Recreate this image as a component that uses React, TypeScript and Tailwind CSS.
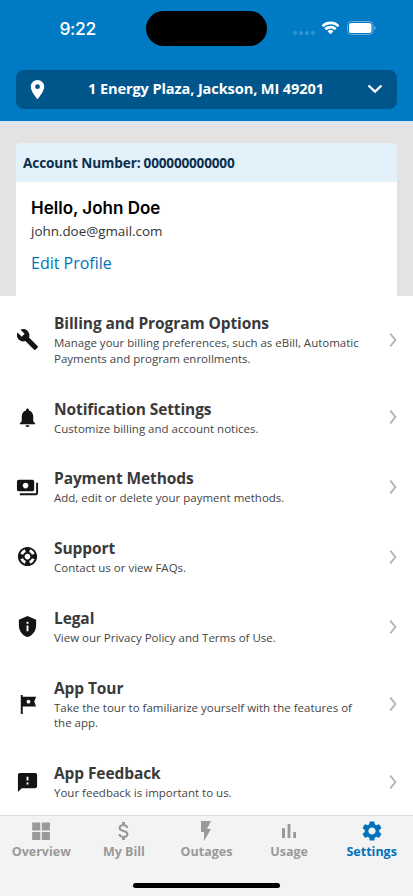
import type { ReactNode } from 'react';
import type { IconType } from 'react-icons';
import {
  MdAttachMoney,
  MdBuild,
  MdFeedback,
  MdFlashOn,
  MdLocationOn,
  MdNotifications,
  MdPayments,
  MdPrivacyTip,
  MdSettings,
  MdSupport,
  MdTour,
} from 'react-icons/md';

interface SettingsItem {
  title: string;
  description: ReactNode;
  icon: IconType;
  tall?: boolean;
}

interface Tab {
  label: string;
  icon: ReactNode;
  active?: boolean;
}

const items: SettingsItem[] = [
  {
    title: 'Billing and Program Options',
    description: (
      <>
        Manage your billing preferences, such as eBill, Automatic
        <br />
        Payments and program enrollments.
      </>
    ),
    icon: MdBuild,
    tall: true,
  },
  {
    title: 'Notification Settings',
    description: 'Customize billing and account notices.',
    icon: MdNotifications,
  },
  {
    title: 'Payment Methods',
    description: 'Add, edit or delete your payment methods.',
    icon: MdPayments,
  },
  { title: 'Support', description: 'Contact us or view FAQs.', icon: MdSupport },
  {
    title: 'Legal',
    description: 'View our Privacy Policy and Terms of Use.',
    icon: MdPrivacyTip,
  },
  {
    title: 'App Tour',
    description: (
      <>
        Take the tour to familiarize yourself with the features of
        <br />
        the app.
      </>
    ),
    icon: MdTour,
    tall: true,
  },
  { title: 'App Feedback', description: 'Your feedback is important to us.', icon: MdFeedback },
];

const tabs: Tab[] = [
  {
    label: 'Overview',
    icon: (
      <svg viewBox="0 0 24 24" className="size-6" fill="currentColor">
        <path d="M3.2 3.5h8.1v8.1H3.2zM12.8 3.5h8.1v8.1h-8.1zM3.2 13.1h8.1v7.9H3.2zM12.8 13.1h8.1v7.9h-8.1z" />
      </svg>
    ),
  },
  { label: 'My Bill', icon: <MdAttachMoney className="size-6" /> },
  { label: 'Outages', icon: <MdFlashOn className="size-6" /> },
  {
    label: 'Usage',
    icon: (
      <svg viewBox="0 0 24 24" className="size-6" fill="currentColor">
        <path d="M5 9.2h3V19H5zM10.6 5h2.8v14h-2.8zM16.2 13H19v6h-2.8z" />
      </svg>
    ),
  },
  { label: 'Settings', icon: <MdSettings className="size-6" />, active: true },
];

function StatusBar() {
  return (
    <div className="flex h-[70px] items-start pt-[11px]">
      <div className="w-[146px] pt-[7px] pl-[59.5px] font-['Inter'] text-[17.5px] leading-[22px] font-medium tracking-[-0.4px]">
        9:22
      </div>
      <div className="h-[35px] w-[121px] rounded-full bg-black" />
      <div className="ml-[26px] flex pt-[20px]">
        <div className="flex gap-[2px]">
          {[0, 1, 2, 3].map((dot) => (
            <span key={dot} className="size-1 rounded-full bg-[#3395cf]" />
          ))}
        </div>
      </div>
      <svg viewBox="0 0 18 13" className="mt-[10px] ml-[6px] h-[14px] w-[19px]" fill="currentColor">
        <path d="M9 2.9c2.5 0 4.8 1 6.5 2.6.15.13.36.13.5 0l1.25-1.37a.36.36 0 0 0 0-.52A12 12 0 0 0 .75 3.6a.36.36 0 0 0 0 .52L2 5.5c.14.13.35.13.5 0A9.4 9.4 0 0 1 9 2.9z" />
        <path d="M9 7.05c1.37 0 2.7.5 3.7 1.42.15.14.37.14.5 0l1.36-1.38a.37.37 0 0 0 0-.53 7.9 7.9 0 0 0-11.1 0 .37.37 0 0 0 0 .53L4.8 8.47c.14.14.36.14.5 0A5.5 5.5 0 0 1 9 7.05z" />
        <path d="M11.6 9.85a.35.35 0 0 0 0-.53 3.9 3.9 0 0 0-5.2 0 .35.35 0 0 0 0 .53l2.35 2.4c.14.14.36.14.5 0z" />
      </svg>
      <svg viewBox="0 0 29 14" className="mt-[10px] ml-[7px] h-[14px] w-[29px]">
        <rect x="0.5" y="0.5" width="25.5" height="13" rx="4" fill="none" stroke="#66afdb" />
        <rect x="2" y="2" width="22.5" height="10" rx="2.6" fill="white" />
        <path d="M27.2 4.8v4.4c.9-.4 1.5-1.2 1.5-2.2s-.6-1.8-1.5-2.2z" fill="#66afdb" />
      </svg>
    </div>
  );
}

function Chevron() {
  return (
    <svg viewBox="0 0 8 14" className="h-[14px] w-2 shrink-0" fill="none">
      <path d="M1.3 0.6 6.4 7l-5.1 6.4" stroke="#b5b5b5" strokeWidth="1.9" />
    </svg>
  );
}

function SettingsRow({ title, description, icon: Icon, tall }: SettingsItem) {
  return (
    <button
      type="button"
      className={`flex w-full shrink-0 items-center px-4 text-left ${tall ? 'h-[85.5px]' : 'h-[69.8px]'}`}
    >
      <Icon className="size-[23px] shrink-0 text-[#141414]" />
      <span className="ml-[15px] flex-1">
        <span className="-mt-px block pb-px text-[15.5px] leading-[22px] font-bold tracking-[-0.1px] text-[#3a3a3a]">
          {title}
        </span>
        <span className="block text-[11.5px] leading-[15.8px] whitespace-nowrap text-[#454545]">
          {description}
        </span>
      </span>
      <Chevron />
    </button>
  );
}

export default function App() {
  return (
    <div className="flex h-[896px] w-[413px] flex-col overflow-hidden bg-white font-['Open_Sans',sans-serif]">
      {/* Header */}
      <header className="h-[121px] shrink-0 bg-[#007ac2] text-white">
        <StatusBar />
        <button
          type="button"
          className="mx-4 flex h-[39px] w-[381px] items-center rounded-lg bg-[#00568a] pr-3.5 pl-[10px]"
        >
          <MdLocationOn className="size-[23px]" />
          <span className="flex-1 pr-1 pb-px text-center text-[14.6px] font-bold tracking-[-0.12px]">
            1 Energy Plaza, Jackson, MI 49201
          </span>
          <svg viewBox="0 0 16 10" className="mb-[2px] h-[10px] w-4" fill="none">
            <path d="M1.5 1.5 8 7.7l6.5-6.2" stroke="currentColor" strokeWidth="2.3" />
          </svg>
        </button>
      </header>

      {/* Account card */}
      <section className="h-[175px] shrink-0 border-t-4 border-[#dce6ed] bg-[#e3e3e3] px-4 pt-[18px]">
        <div className="h-full rounded-t-md bg-white">
          <div className="flex h-[39px] items-center rounded-t-md bg-[#e3f1fa] pt-px pl-[7px] text-[13.6px] font-bold text-[#0a2f4d]">
            <span className="tracking-[-0.1px]">Account Number:</span>
            <span className="ml-[3px] tracking-[-0.2px]">000000000000</span>
          </div>
          <div className="pt-[14px] pl-[15px]">
            <h1 className="font-['Inter'] text-[17px] leading-[24px] font-semibold text-black">
              Hello, John Doe
            </h1>
            <p className="text-[13.4px] leading-[22px] text-[#333333]">john.doe@gmail.com</p>
            <a href="#" className="mt-[10px] block text-[16px] leading-[22px] font-medium text-[#0075bb]">
              Edit Profile
            </a>
          </div>
        </div>
      </section>

      {/* Settings list */}
      <main className="flex min-h-0 flex-1 flex-col overflow-hidden pt-px">
        {items.map((item) => (
          <SettingsRow key={item.title} {...item} />
        ))}
      </main>

      {/* Tab bar */}
      <nav className="h-[81px] shrink-0 border-t border-[#dddddd] bg-[#f3f3f3]">
        <div className="grid grid-cols-5 pt-[3px]">
          {tabs.map((tab) => (
            <a
              key={tab.label}
              href="#"
              className={`flex flex-col items-center text-[12.5px] leading-[18px] font-bold ${
                tab.active ? 'text-[#0072bc]' : 'text-[#999999]'
              }`}
            >
              {tab.icon}
              <span>{tab.label}</span>
            </a>
          ))}
        </div>
        <div className="mx-auto mt-[22px] h-[5px] w-[147px] rounded-full bg-black" />
      </nav>
    </div>
  );
}
